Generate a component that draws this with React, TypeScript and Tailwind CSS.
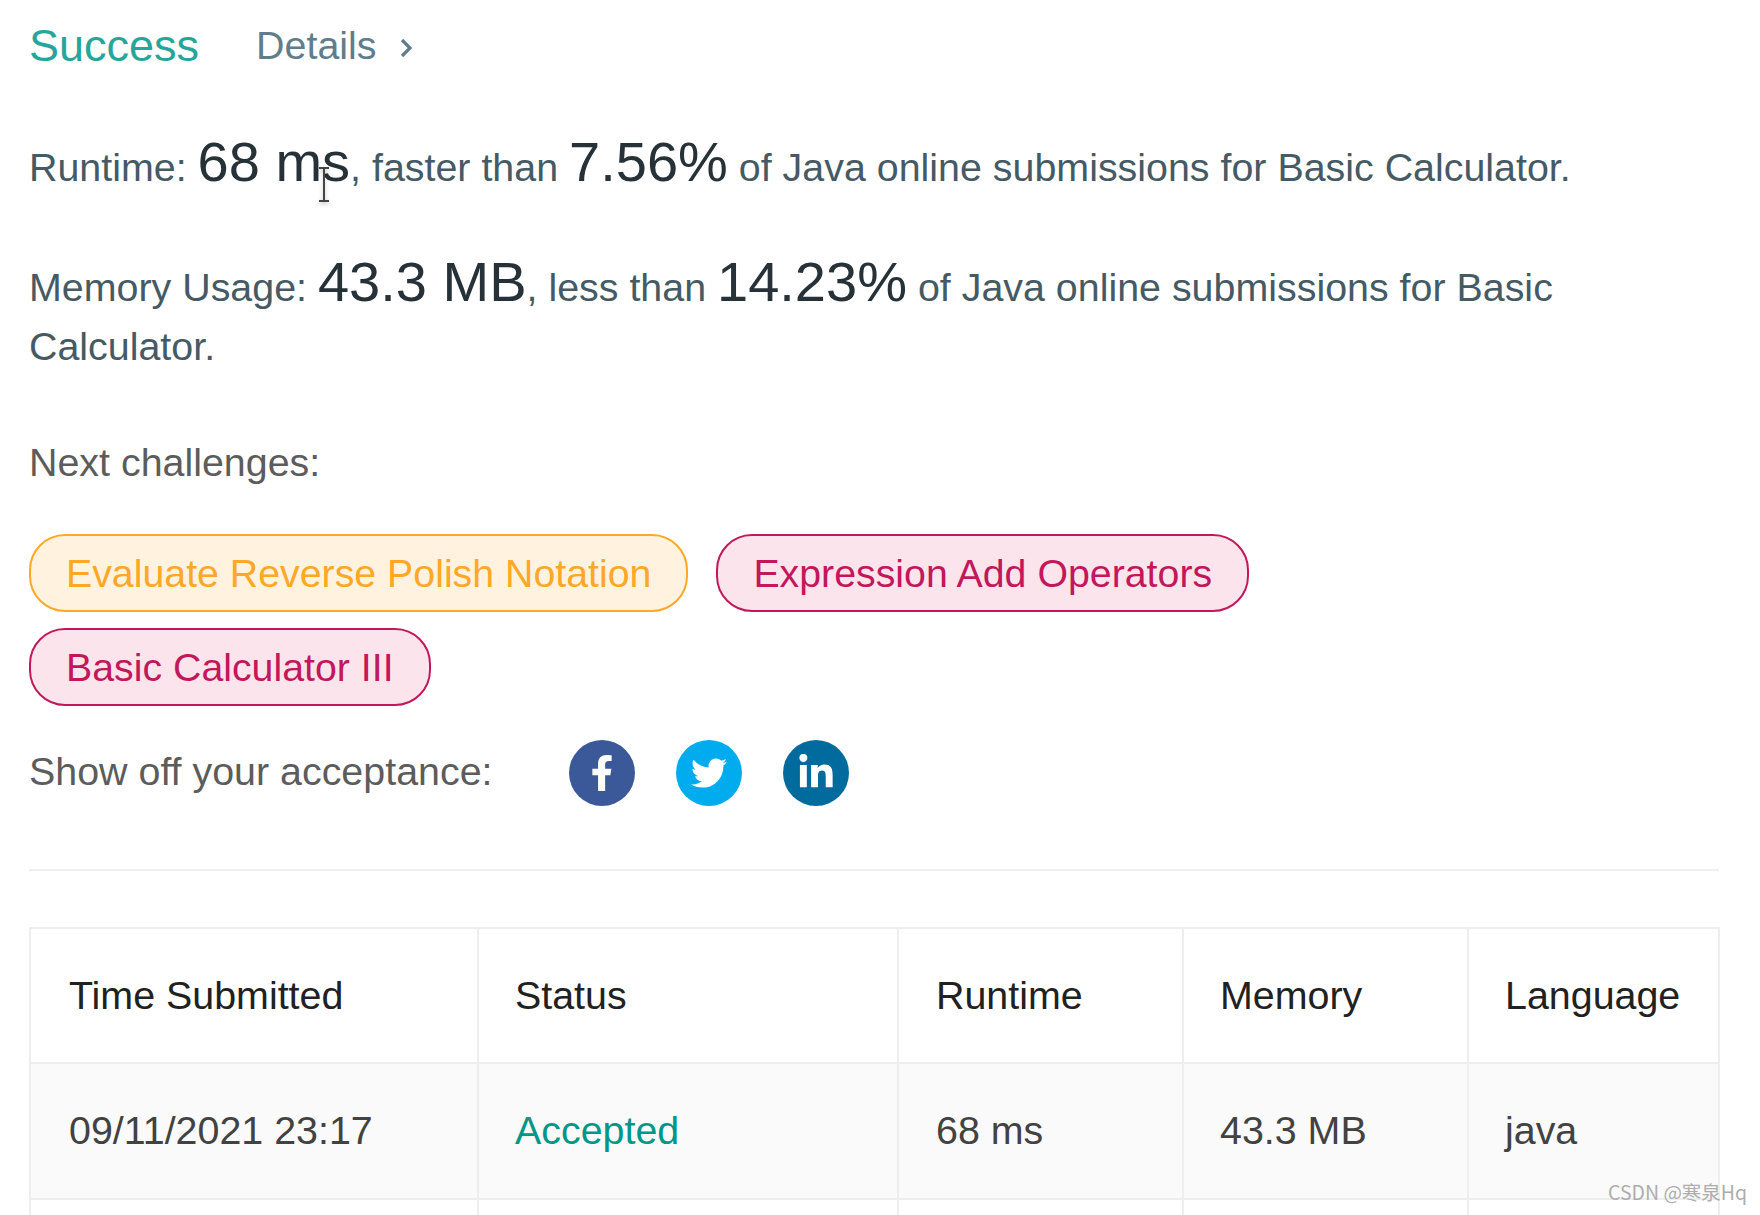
import { FaFacebookF, FaTwitter, FaLinkedinIn } from 'react-icons/fa';

const sans = "font-['Liberation_Sans',Arial,sans-serif]";

function Pill({ label, tone }: { label: string; tone: 'orange' | 'pink' }) {
  return (
    <span
      className={`inline-flex h-[78px] items-center rounded-[36px] border-2 px-[35px] text-[39.3px] ${
        tone === 'orange'
          ? 'border-[#ffa726] bg-[#fff3e0] text-[#ffa726]'
          : 'border-[#c2185b] bg-[#fce4ec] text-[#c2185b]'
      }`}
    >
      {label}
    </span>
  );
}

function Big({ children }: { children: string }) {
  return <span className="text-[56px] text-[#263238]">{children}</span>;
}

export default function App() {
  return (
    <div className={`relative h-[1215px] overflow-hidden bg-white ${sans}`}>
      <div className="w-[1719px] pl-[29px]">
        {/* header */}
        <div className="flex h-[92px] items-center">
          <span className="text-[45px] text-[#26a69a]">Success</span>
          <span className="ml-[57px] text-[39.4px] text-[#607d8b]">Details</span>
          <svg className="ml-[23px] mt-[4px]" width="15" height="22" viewBox="0 0 15 22" fill="none">
            <path d="M3 3l8 8-8 8" stroke="#607d8b" strokeWidth="3.2" />
          </svg>
        </div>

        {/* result text */}
        <p className="mt-[40px] text-[39.4px] leading-[60px] text-[#455a64]">
          Runtime: <Big>68 ms</Big>, faster than <Big>7.56%</Big> of Java online submissions for Basic Calculator.
        </p>
        <p className="mt-[55px] text-[39.4px] leading-[59px] text-[#455a64]">
          Memory Usage: <Big>43.3 MB</Big>, less than <Big>14.23%</Big> of Java online submissions for Basic Calculator.
        </p>

        <p className="mt-[56px] text-[39.4px] leading-[60px] text-[#5c5c5c]">Next challenges:</p>

        <div className="mt-[42px] flex max-w-[1400px] flex-wrap gap-x-[28px] gap-y-[16px]">
          <Pill label="Evaluate Reverse Polish Notation" tone="orange" />
          <Pill label="Expression Add Operators" tone="pink" />
          <Pill label="Basic Calculator III" tone="pink" />
        </div>

        <div className="mt-[34px] flex items-center">
          <span className="w-[540px] -translate-y-px text-[39.4px] text-[#5c5c5c]">Show off your acceptance:</span>
          <span className="flex h-[66px] w-[66px] items-center justify-center rounded-full bg-[#3b5998] text-white">
            <FaFacebookF size={36} />
          </span>
          <span className="ml-[41px] flex h-[66px] w-[66px] items-center justify-center rounded-full bg-[#00aced] text-white">
            <FaTwitter size={36} />
          </span>
          <span className="ml-[41px] flex h-[66px] w-[66px] items-center justify-center rounded-full bg-[#006b9c] text-white">
            <FaLinkedinIn size={38} />
          </span>
        </div>

        <div className="mt-[63px] h-[2px] bg-[#eeeeee]" />

        {/* submissions */}
        <table className="mt-[56px] w-[1689px] table-fixed border-collapse text-left text-[39.4px]">
          <colgroup>
            <col className="w-[448px]" />
            <col className="w-[420px]" />
            <col className="w-[285px]" />
            <col className="w-[285px]" />
            <col className="w-[251px]" />
          </colgroup>
          <thead>
            <tr className="h-[135px] text-[#212121]">
              <th className="border-2 border-[#eeeeee] pl-[38px] font-normal">Time Submitted</th>
              <th className="border-2 border-[#eeeeee] pl-[36px] font-normal">Status</th>
              <th className="border-2 border-[#eeeeee] pl-[37px] font-normal">Runtime</th>
              <th className="border-2 border-[#eeeeee] pl-[36px] font-normal">Memory</th>
              <th className="border-2 border-[#eeeeee] pl-[36px] font-normal">Language</th>
            </tr>
          </thead>
          <tbody>
            <tr className="h-[136px] bg-[#fafafa] text-[#424242]">
              <td className="border-2 border-[#eeeeee] pl-[38px]">09/11/2021 23:17</td>
              <td className="border-2 border-[#eeeeee] pl-[36px] text-[#009688]">Accepted</td>
              <td className="border-2 border-[#eeeeee] pl-[37px]">68 ms</td>
              <td className="border-2 border-[#eeeeee] pl-[36px]">43.3 MB</td>
              <td className="border-2 border-[#eeeeee] pl-[36px]">java</td>
            </tr>
            <tr className="h-[135px]">
              <td className="border-2 border-[#eeeeee]" />
              <td className="border-2 border-[#eeeeee]" />
              <td className="border-2 border-[#eeeeee]" />
              <td className="border-2 border-[#eeeeee]" />
              <td className="border-2 border-[#eeeeee]" />
            </tr>
          </tbody>
        </table>
      </div>

      {/* text cursor caught in the capture */}
      <svg
        className="absolute left-[316px] top-[166px] drop-shadow-[0_2px_2px_rgba(0,0,0,0.25)]"
        width="16"
        height="38"
        viewBox="0 0 16 38"
        fill="none"
      >
        <path d="M3 2h10M8 2v33M3 35h10" stroke="#444" strokeWidth="2" />
      </svg>

      {/* watermark */}
      <span className="absolute left-[1608px] top-[1177px] font-['Noto_Sans_CJK_SC',sans-serif] text-[19.5px] text-[#adadad]">
        CSDN @寒泉Hq
      </span>
    </div>
  );
}
